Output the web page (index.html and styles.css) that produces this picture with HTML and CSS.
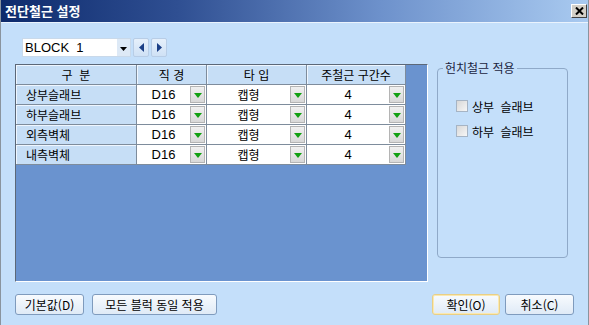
FILE: index.html
```html
<!DOCTYPE html>
<html lang="ko">
<head>
    <meta charset="UTF-8">
    <meta name="viewport" content="width=device-width, initial-scale=1.0">
    <title>전단철근 설정</title>
    <link rel="stylesheet" href="styles.css">
</head>
<body>
    <div class="window">
        <div class="titlebar">
            <span class="title">전단철근 설정</span>
            <div class="close-btn">
                <svg width="9" height="8" viewBox="0 0 9 8"><path d="M1 0.5 L8 7.5 M8 0.5 L1 7.5" stroke="#000" stroke-width="2"/></svg>
            </div>
        </div>
        <div class="content">
            <div class="toolbar">
                <div class="combo">
                    <span class="combo-text">BLOCK&nbsp;&nbsp;1</span>
                    <span class="combo-btn">
                        <svg width="7" height="4" viewBox="0 0 7 4"><path d="M0 0 H7 L3.5 4 Z" fill="#000"/></svg>
                    </span>
                </div>
                <div class="nav-btn">
                    <svg width="5" height="9" viewBox="0 0 5 9"><path d="M5 0 V9 L0 4.5 Z" fill="#1b3f86"/></svg>
                </div>
                <div class="nav-btn">
                    <svg width="5" height="9" viewBox="0 0 5 9"><path d="M0 0 V9 L5 4.5 Z" fill="#1b3f86"/></svg>
                </div>
            </div>

            <div class="main">
                <div class="grid">
                    <div class="sheet">
                        <div class="hcell">구&nbsp;&nbsp;분</div>
                        <div class="hcell">직&nbsp;경</div>
                        <div class="hcell">타&nbsp;입</div>
                        <div class="hcell">주철근 구간수</div>

                        <div class="rcell">상부슬래브</div>
                        <div class="dcell"><span class="val">D16</span><span class="drop"><i></i></span></div>
                        <div class="dcell"><span class="val kr">캡형</span><span class="drop"><i></i></span></div>
                        <div class="dcell"><span class="val">4</span><span class="drop"><i></i></span></div>

                        <div class="rcell">하부슬래브</div>
                        <div class="dcell"><span class="val">D16</span><span class="drop"><i></i></span></div>
                        <div class="dcell"><span class="val kr">캡형</span><span class="drop"><i></i></span></div>
                        <div class="dcell"><span class="val">4</span><span class="drop"><i></i></span></div>

                        <div class="rcell">외측벽체</div>
                        <div class="dcell"><span class="val">D16</span><span class="drop"><i></i></span></div>
                        <div class="dcell"><span class="val kr">캡형</span><span class="drop"><i></i></span></div>
                        <div class="dcell"><span class="val">4</span><span class="drop"><i></i></span></div>

                        <div class="rcell">내측벽체</div>
                        <div class="dcell"><span class="val">D16</span><span class="drop"><i></i></span></div>
                        <div class="dcell"><span class="val kr">캡형</span><span class="drop"><i></i></span></div>
                        <div class="dcell"><span class="val">4</span><span class="drop"><i></i></span></div>
                    </div>
                </div>

                <fieldset class="group">
                    <legend>헌치철근 적용</legend>
                    <label class="check"><span class="box"></span>상부 슬래브</label>
                    <label class="check"><span class="box"></span>하부 슬래브</label>
                </fieldset>
            </div>

            <div class="buttons">
                <div class="btn-group">
                    <div class="btn btn-default-val">기본값(D)</div>
                    <div class="btn btn-all">모든 블럭 동일 적용</div>
                </div>
                <div class="btn-group">
                    <div class="btn btn-ok">확인(O)</div>
                    <div class="btn btn-cancel">취소(C)</div>
                </div>
            </div>
        </div>
    </div>
</body>
</html>
```

FILE: styles.css
```css
body {
    margin: 0;
    padding: 0;
    font-family: "Noto Sans CJK KR", "Liberation Sans", sans-serif;
    font-size: 12px;
    color: #000000;
    background-color: #c4dffa;
}
.window {
    width: 589px;
    height: 325px;
    box-sizing: border-box;
    border-left: 1px solid #8a949e;
    border-right: 1px solid #8a949e;
    background-color: #c4dffa;
    overflow: hidden;
}
.titlebar {
    height: 22px;
    display: flex;
    align-items: center;
    justify-content: space-between;
    padding: 0 1px 0 4px;
    background: linear-gradient(to right, #0d2a6c 0%, #2f4f92 30%, #6e92cc 65%, #a9caf0 100%);
    border-bottom: 1px solid #eaf3fd;
}
.title {
    color: #ffffff;
    font-weight: bold;
    font-size: 13px;
    line-height: 22px;
}
.close-btn {
    width: 16px;
    height: 14px;
    box-sizing: border-box;
    background-color: #d4d0c8;
    border: 1px solid;
    border-color: #ffffff #404040 #404040 #ffffff;
    display: flex;
    align-items: center;
    justify-content: center;
}
.content {
    padding-left: 14px;
}
.toolbar {
    display: flex;
    align-items: center;
    margin-top: 14px;
    margin-left: 7px;
    height: 20px;
}
.combo {
    width: 109px;
    height: 19px;
    box-sizing: border-box;
    display: flex;
    background-color: #ffffff;
    border: 1px solid #c9d9ea;
}
.combo-text {
    flex: 1;
    padding-left: 2px;
    line-height: 17px;
    font-family: "Liberation Sans", sans-serif;
    font-size: 13px;
}
.combo-btn {
    width: 13px;
    display: flex;
    align-items: center;
    justify-content: center;
    background-color: #dde9f6;
    padding-top: 3px;
}
.nav-btn {
    width: 16px;
    height: 19px;
    box-sizing: border-box;
    margin-left: 2px;
    display: flex;
    align-items: center;
    justify-content: center;
    background: linear-gradient(#e6f0fb, #cfe1f5);
    border: 1px solid #b8cde6;
    border-radius: 2px;
}
.nav-btn:first-of-type {
    margin-left: 3px;
}
.main {
    display: flex;
    align-items: flex-start;
    margin-top: 4px;
}
.grid {
    width: 413px;
    height: 218px;
    box-sizing: border-box;
    margin-top: 3px;
    background-color: #6a93cf;
    border: 1px solid;
    border-color: #5c6878 #ffffff #ffffff #5c6878;
}
.sheet {
    display: grid;
    grid-template-columns: 121px 70px 100px 99px;
    grid-auto-rows: 20px;
    width: fit-content;
}
.hcell,
.rcell {
    box-sizing: border-box;
    background-color: #c6def6;
    border-right: 1px solid #7e8c9c;
    border-bottom: 1px solid #7e8c9c;
    box-shadow: inset 1px 1px #eef6ff;
    line-height: 19px;
}
.hcell {
    text-align: center;
}
.rcell {
    padding-left: 10px;
}
.dcell {
    box-sizing: border-box;
    display: flex;
    align-items: center;
    background-color: #ffffff;
    border-right: 1px solid #7e8c9c;
    border-bottom: 1px solid #7e8c9c;
}
.val {
    flex: 1;
    text-align: center;
    line-height: 19px;
    font-family: "Liberation Sans", sans-serif;
    font-size: 13px;
}
.val.kr {
    font-family: "Noto Sans CJK KR", sans-serif;
    font-size: 12px;
}
.drop {
    width: 15px;
    height: 17px;
    box-sizing: border-box;
    margin-right: 1px;
    display: flex;
    align-items: center;
    justify-content: center;
    background: linear-gradient(#f0f0f0, #d8d8d8);
    border: 1px solid #b4b4b4;
}
.drop i {
    width: 0;
    height: 0;
    border-left: 4px solid transparent;
    border-right: 4px solid transparent;
    border-top: 5px solid #12a012;
    margin-top: 2px;
}
.group {
    width: 131px;
    height: 197px;
    box-sizing: border-box;
    margin: 0 0 0 9px;
    padding: 22px 0 0 0;
    border: 1px solid #8fa9c8;
    border-radius: 4px;
}
.group legend {
    padding: 0 2px;
    margin-left: 5px;
    line-height: 14px;
    color: #1a2440;
}
.check {
    display: flex;
    align-items: center;
    height: 18px;
    margin: 0 0 7px 18px;
    word-spacing: 3px;
}
.box {
    width: 12px;
    height: 12px;
    box-sizing: border-box;
    margin-right: 4px;
    border: 1px solid #a6b4c4;
    background: linear-gradient(135deg, #d8d8d8, #f6f6f6);
}
.buttons {
    display: flex;
    justify-content: space-between;
    margin-top: 12px;
    padding-right: 14px;
}
.btn-group {
    display: flex;
}
.btn {
    height: 21px;
    box-sizing: border-box;
    line-height: 19px;
    text-align: center;
    background: linear-gradient(#f8fbfe, #dfeaf6);
    border: 1px solid #7f9bbd;
    border-radius: 3px;
}
.btn-default-val {
    width: 69px;
}
.btn-all {
    width: 125px;
    margin-left: 8px;
}
.btn-ok {
    width: 68px;
    border-color: #e9cf86;
    box-shadow: inset 0 0 0 1px #fbe9b0;
}
.btn-cancel {
    width: 69px;
    margin-left: 5px;
}
```
